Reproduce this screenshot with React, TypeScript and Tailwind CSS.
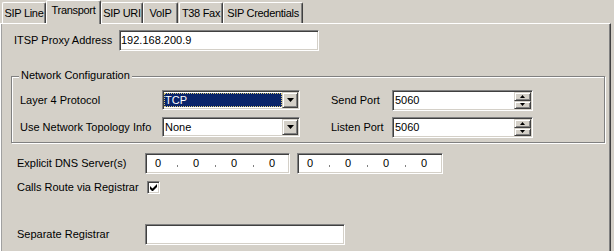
import React from "react";

const sunken =
  "border border-t-[#808080] border-l-[#808080] border-b-white border-r-white shadow-[inset_1px_1px_0_#404040,inset_-1px_-1px_0_#d4d0c8] bg-white";
const raised =
  "border border-t-[#d4d0c8] border-l-[#d4d0c8] border-b-[#404040] border-r-[#404040] shadow-[inset_1px_1px_0_white,inset_-1px_-1px_0_#808080] bg-[#d4d0c8]";

function Tab({ label, w, selected, extra }: { label: string; w: string; selected?: boolean; extra?: string }) {
  if (selected) {
    return (
      <div
        className={`${w} h-[24px] -mb-px relative z-10 bg-[#d4d0c8] border-t border-l border-white border-r border-r-[#404040] shadow-[inset_-1px_0_0_#808080] rounded-t-[2px] pt-[3px] leading-[13px] text-center whitespace-nowrap tracking-[-0.3px]`}
      >
        {label}
      </div>
    );
  }
  return (
    <div
      className={`${w} ${extra ?? ""} h-[21px] border-t border-l border-white border-r border-r-[#404040] shadow-[inset_-1px_0_0_#808080] rounded-t-[2px] pt-[4px] leading-[13px] text-center whitespace-nowrap tracking-[-0.3px]`}
    >
      {label}
    </div>
  );
}

function DownArrow() {
  return (
    <svg width="7" height="4" viewBox="0 0 7 4">
      <path d="M0 0h7L3.5 4z" fill="#000" />
    </svg>
  );
}

function Combo({ value, selected }: { value: string; selected?: boolean }) {
  return (
    <div className={`${sunken} w-[138px] h-[20px] p-[1px] flex`}>
      <div className="flex-1 flex items-center">
        {selected ? (
          <div className="w-full h-[14px] bg-[#0a246a] text-white border border-dotted border-[#d8c878] leading-[12px]">
            {value}
          </div>
        ) : (
          <div className="pl-[1px] leading-[13px]">{value}</div>
        )}
      </div>
      <div className={`${raised} w-[16px] h-full flex items-center justify-center`}>
        <DownArrow />
      </div>
    </div>
  );
}

function Spin({ value }: { value: string }) {
  return (
    <div className={`${sunken} w-[141px] h-[21px] p-[1px] flex`}>
      <div className="flex-1 flex items-center pl-[1px] leading-[13px]">{value}</div>
      <div className="w-[17px] flex flex-col">
        <div className={`${raised} flex-1 flex items-center justify-center`}>
          <svg width="5" height="3" viewBox="0 0 5 3">
            <path d="M2.5 0L5 3H0z" fill="#000" />
          </svg>
        </div>
        <div className={`${raised} flex-1 flex items-center justify-center`}>
          <svg width="5" height="3" viewBox="0 0 5 3">
            <path d="M0 0h5L2.5 3z" fill="#000" />
          </svg>
        </div>
      </div>
    </div>
  );
}

function IpBox({ w }: { w: string }) {
  const Dot = () => (
    <div className="w-[14px] flex justify-center">
      <div className="w-[1px] h-[2px] bg-[#808080] mt-[4px]" />
    </div>
  );
  const Num = () => <div className="w-[24px] text-center leading-[13px]">0</div>;
  return (
    <div className={`${sunken} ${w} h-[21px] flex items-center`}>
      <Num />
      <Dot />
      <Num />
      <Dot />
      <Num />
      <Dot />
      <Num />
    </div>
  );
}

export default function App() {
  return (
    <div className="w-[614px] h-[251px] bg-[#d4d0c8] flex flex-col overflow-hidden text-[11px] text-black font-['Liberation_Sans',Arial,sans-serif]">
      {/* Tab strip */}
      <div className="h-[23px] flex items-end pl-[2px]">
        <Tab label="SIP Line" w="w-[44px]" />
        <Tab label="Transport" w="w-[55px]" selected />
        <Tab label="SIP URI" w="w-[42px]" />
        <Tab label="VoIP" w="w-[35px]" />
        <Tab label="T38 Fax" w="w-[44px]" extra="ml-[1px]" />
        <Tab label="SIP Credentials" w="w-[80px]" />
      </div>

      {/* Page */}
      <div className="w-[611px] flex-1 border-t border-l border-white border-r border-r-[#404040] shadow-[inset_1px_0_0_#a0a0a0,inset_-1px_0_0_#808080]">
        {/* ITSP */}
        <div className="mt-[6px] pl-[13px] flex items-center">
          <div className="w-[105px] leading-[13px]">ITSP Proxy Address</div>
          <div className={`${sunken} w-[200px] h-[21px] flex items-center pl-[1px] leading-[13px]`}>192.168.200.9</div>
        </div>

        {/* Group box */}
        <div className="mt-[25px] ml-[10px] w-[594px] h-[67px] relative border border-[#808080] shadow-[inset_1px_1px_0_white,1px_1px_0_white] pt-[13px] pl-[8px]">
          <div className="absolute left-[7px] top-[-8px] px-[2px] bg-[#d4d0c8] leading-[13px]">Network Configuration</div>
          <div className="flex items-center">
            <div className="w-[142px] leading-[13px]">Layer 4 Protocol</div>
            <div className="h-[21px] flex items-start">
              <Combo value="TCP" selected />
            </div>
            <div className="ml-[31px] w-[61px] leading-[13px]">Send Port</div>
            <Spin value="5060" />
          </div>
          <div className="mt-[6px] flex items-center">
            <div className="w-[142px] leading-[13px]">Use Network Topology Info</div>
            <div className="h-[21px] flex items-start">
              <Combo value="None" />
            </div>
            <div className="ml-[31px] w-[61px] leading-[13px]">Listen Port</div>
            <Spin value="5060" />
          </div>
        </div>

        {/* DNS */}
        <div className="mt-[10px] pl-[16px] flex items-center">
          <div className="w-[128px] leading-[13px]">Explicit DNS Server(s)</div>
          <IpBox w="w-[145px]" />
          <div className="ml-[7px]">
            <IpBox w="w-[146px]" />
          </div>
        </div>

        {/* Calls route */}
        <div className="mt-[7px] pl-[16px] flex items-center">
          <div className="w-[130px] leading-[13px]">Calls Route via Registrar</div>
          <div className={`${sunken} w-[13px] h-[13px] flex items-center justify-center`}>
            <svg width="7" height="7" viewBox="0 0 7 7">
              <path d="M0 2v3l2 2h1l4-4V0L2.5 4.5z" fill="#000" />
            </svg>
          </div>
        </div>

        {/* Separate registrar */}
        <div className="mt-[30px] pl-[16px] flex items-center">
          <div className="w-[128px] leading-[13px]">Separate Registrar</div>
          <div className={`${sunken} w-[200px] h-[21px]`} />
        </div>
      </div>
    </div>
  );
}
